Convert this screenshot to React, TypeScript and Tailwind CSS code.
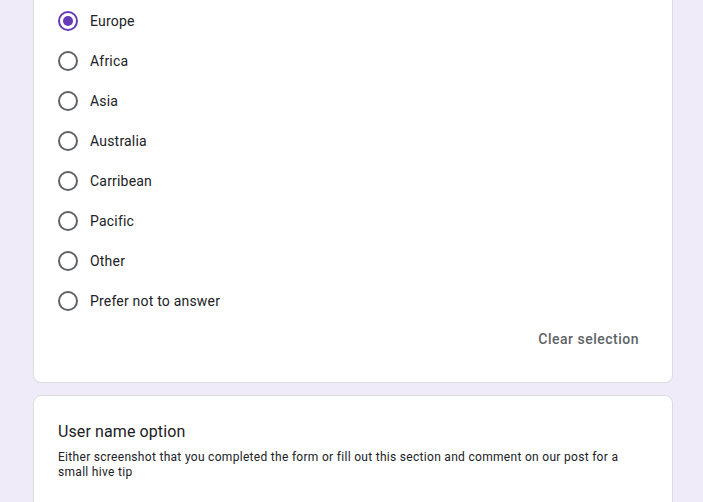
import React from "react";

const options = ["Europe", "Africa", "Asia", "Australia", "Carribean", "Pacific", "Other", "Prefer not to answer"];

function Radio({ checked }: { checked: boolean }) {
  return (
    <div
      className={
        "w-[20px] h-[20px] rounded-full border-2 flex items-center justify-center shrink-0 " +
        (checked ? "border-[#673ab7]" : "border-[#5f6368]")
      }
    >
      {checked && <div className="w-[10px] h-[10px] rounded-full bg-[#673ab7]" />}
    </div>
  );
}

export default function App() {
  return (
    <div
      className="w-[703px] h-[502px] overflow-hidden bg-[#f0ebf8]"
      style={{ fontFamily: "Roboto, 'Liberation Sans', sans-serif" }}
    >
      <div className="ml-[33px] w-[640px] flex flex-col gap-[12px]">
        <div className="bg-white border border-t-0 border-[#dadce0] rounded-b-lg pl-[24px] pt-[1px] pb-[25px]">
          <div className="flex flex-col">
            {options.map((o, i) => (
              <div key={o} className="h-[40px] flex items-center gap-[12px]">
                <Radio checked={i === 0} />
                <span className="text-[14px] text-[#202124] tracking-[0.2px]">{o}</span>
              </div>
            ))}
          </div>
          <div className="flex justify-end pr-[33px] h-[36px] items-center">
            <span className="text-[14px] font-medium text-[#5f6368] tracking-[0.5px]">Clear selection</span>
          </div>
        </div>
        <div className="bg-white border border-[#dadce0] rounded-lg px-[24px] pt-[24px] h-[200px]">
          <div className="text-[16px] leading-[24px] text-[#202124] tracking-[0.1px]">User name option</div>
          <div className="mt-[6px] text-[12px] leading-[15px] text-[#202124] tracking-[0.3px] w-[592px]">
            Either screenshot that you completed the form or fill out this section and comment on our post for a small hive tip
          </div>
        </div>
      </div>
    </div>
  );
}
